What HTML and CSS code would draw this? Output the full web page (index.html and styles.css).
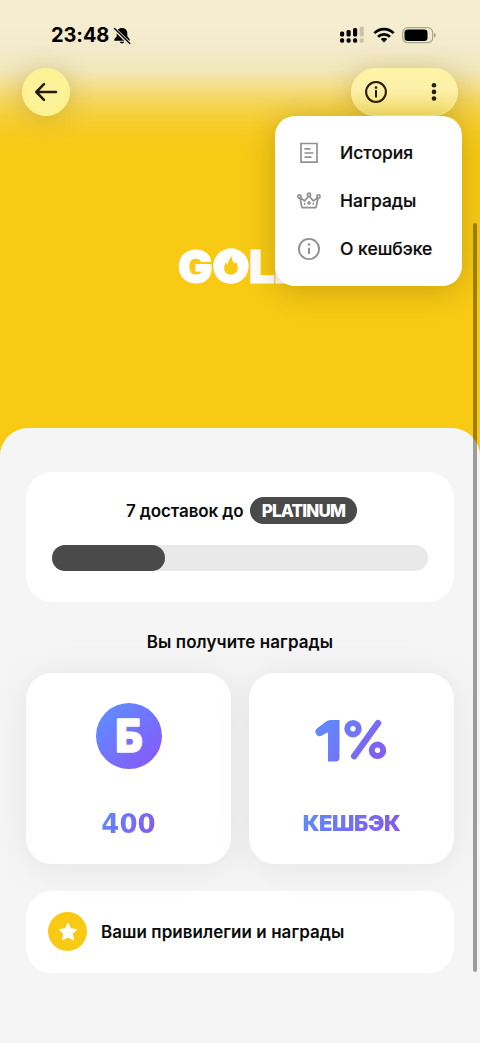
FILE: index.html
```html
<!DOCTYPE html>
<html lang="ru">
<head>
<meta charset="utf-8">
<meta name="viewport" content="width=device-width">
<title>Gold</title>
<link rel="stylesheet" href="styles.css">
</head>
<body>
<main class="screen">
  <header class="top">
    <div class="status">
      <div class="status-left">
        <span class="time">23:48</span>
        <svg class="bell" width="18" height="18" viewBox="0 0 18 18"><path d="M9 1C5.800 1 3.700 3.200 3.700 6v3.200L1.300 12.200v1.500h15.400v-1.500l-2.400-3V6C14.300 3.200 12.200 1 9 1ZM6.700 14.700a2.400 2.400 0 0 0 4.600 0Z"/><path d="M1.500 2 16.800 16.800" stroke="#f4ecce" stroke-width="3.400"/><path d="M1.500 1.500 16.800 16.400" stroke="#000" stroke-width="1.400" stroke-linecap="round"/></svg>
      </div>
      <div class="status-right">
        <svg width="25" height="18" viewBox="0 0 25 18"><rect x="0" y="5.500" width="4.200" height="5" rx="1.500"/><rect x="6.500" y="4" width="4.200" height="6.500" rx="1.500"/><rect x="13" y="2" width="4.200" height="8.500" rx="1.500"/><rect x="0" y="12.200" width="4.200" height="4.600" rx="1.700"/><rect x="6.500" y="12.200" width="4.200" height="4.600" rx="1.700"/><rect x="13" y="12.200" width="4.200" height="4.600" rx="1.700"/><g fill="#c8c2a8"><rect x="19.600" y=".5" width="4.200" height="10" rx="1.500"/><rect x="19.600" y="12.200" width="4.200" height="4.600" rx="1.700"/></g></svg>
        <svg class="wifi" width="22" height="16" viewBox="0 0 22 16"><g fill="none" stroke="#000" stroke-width="2.700"><path d="M1.400 6.100a13.800 13.800 0 0 1 19.200 0"/><path d="M5 9.800a8.600 8.600 0 0 1 12 0"/></g><path d="M7.800 12.100a4.600 4.600 0 0 1 6.400 0L11 15.400Z"/></svg>
        <svg class="battery" width="35" height="17" viewBox="0 0 35 17"><rect x=".7" y=".7" width="30" height="15" rx="5" fill="none" stroke="#aaa58e" stroke-width="1.200"/><rect x="2.500" y="2.500" width="23" height="11.500" rx="3.200"/><path d="M32 5.800c2.300.7 2.300 4.300 0 5Z" fill="#aaa58e"/></svg>
      </div>
    </div>
    <nav class="nav">
      <button class="glass back" aria-label="Назад"><svg width="24" height="20" viewBox="0 0 24 20"><path d="M22 10H2.500M10 2.200 2.300 10l7.700 7.800" fill="none" stroke="#261c00" stroke-width="2.500" stroke-linecap="round" stroke-linejoin="round"/></svg></button>
      <div class="glass actions">
        <svg width="24" height="24" viewBox="0 0 24 24"><circle cx="12" cy="12" r="9.900" fill="none" stroke="#261c00" stroke-width="2"/><circle cx="12" cy="7.600" r="1.300" fill="#261c00"/><path d="M12 10.800v6" stroke="#261c00" stroke-width="2" stroke-linecap="round"/></svg>
        <svg class="dots" width="6" height="20" viewBox="0 0 6 20" fill="#261c00"><circle cx="3" cy="3.300" r="2.300"/><circle cx="3" cy="9.900" r="2.300"/><circle cx="3" cy="16.500" r="2.300"/></svg>
        <div class="menu">
          <div class="menu-item"><svg width="24" height="24" viewBox="0 0 24 24"><path d="M4 2.500h16v18.700H4Z"/><path d="M7.500 7.800h6M7.500 12h9M7.500 16.200h7"/></svg><span>История</span></div>
          <div class="menu-item"><svg width="24" height="24" viewBox="0 0 24 24" stroke-linejoin="round"><g stroke-width="1.700"><path d="m2.900 8.500 2.100 10.200h14l2.100-10.200-4.700 3.400L12 7l-4.400 4.900Z"/><g fill="#fff"><circle cx="2.500" cy="7.500" r="1.600"/><circle cx="12" cy="5.700" r="1.600"/><circle cx="21.500" cy="7.500" r="1.600"/></g></g><path d="m12 12 1.800 2-1.800 2-1.800-2Z" fill="#919191" stroke-width=".5"/><path d="M7 14.700h1.500M15.500 14.700H17" stroke-width="1.900"/></svg><span>Награды</span></div>
          <div class="menu-item"><svg width="24" height="24" viewBox="0 0 24 24"><circle cx="12" cy="12" r="10.100" stroke-width="1.900"/><circle cx="12" cy="7.500" r="1.300" fill="#919191" stroke="none"/><path d="M12 10.700v6.200" stroke-width="2"/></svg><span>О кешбэке</span></div>
        </div>
      </div>
    </nav>
  </header>
  <section class="hero">
    <div class="brand"><span class="brand-g">G</span><span class="brand-o">O<svg class="flame" width="36" height="36" viewBox="0 0 36 36"><circle cx="18" cy="18" r="17.700" fill="#fff"/><path d="M18.500 8.200c.3 4 1.700 5.300 3.200 7.600l1.200-2c2 3.700 2.600 6.700 1.200 9.300-2.800 5-9.800 4.800-12.300.1-1.500-3.400-.3-6.500 1.200-8.900l1.500 2.700c.7-4.200 1.900-6.300 4-8.800Z" fill="#f7c916"/></svg></span><span class="brand-l">L</span><span class="brand-d">D</span></div>
  </section>
  <section class="sheet">
    <div class="card progress-card">
      <div class="progress-title"><span class="deliveries">7 доставок до</span><span class="tier"><span>PLATINUM</span></span></div>
      <div class="track"><div class="fill" style="width:30.1%"></div></div>
    </div>
    <h2 class="heading"><span>Вы получите награды</span></h2>
    <div class="rewards">
      <article class="card reward">
        <div class="coin"><svg width="66" height="66" viewBox="0 0 66 66"><text x="19.500" y="48.700" class="coin-letter" textLength="27" lengthAdjust="spacingAndGlyphs">Б</text></svg></div>
        <div class="amount"><span>400</span></div>
      </article>
      <article class="card reward">
        <svg class="percent" width="72" height="44" viewBox="0 0 72 44" role="img" aria-label="1%"><defs><linearGradient id="pg" x1="0" y1="0" x2="72" y2="44" gradientUnits="userSpaceOnUse"><stop stop-color="#5e8fff"/><stop offset="1" stop-color="#8758f0"/></linearGradient></defs><path d="M16 1h8.500v37.500a4 4 0 0 1-4 4H13V13.200l-6.200 3.300a4.300 4.300 0 0 1-4.900-7l8.200-6.200Q13 1 16 1Z" fill="url(#pg)"/><g fill="none" stroke="url(#pg)"><circle cx="38" cy="9.700" r="5.700" stroke-width="6"/><circle cx="62.500" cy="31.300" r="5.700" stroke-width="6"/><path d="m63 4.200-23.800 33" stroke-width="6.400" stroke-linecap="round"/></g></svg>
        <div class="amount cashback"><span>КЕШБЭК</span></div>
      </article>
    </div>
    <div class="card privileges">
      <div class="star"><svg width="22" height="22" viewBox="0 0 22 22"><path d="m11 2 2.700 5.800 6.200.7-4.600 4.300 1.300 6.200L11 16l-5.600 3 1.300-6.200-4.600-4.300 6.200-.7Z" fill="#fff" stroke="#fff" stroke-linejoin="round"/></svg></div>
      <span>Ваши привилегии и награды</span>
    </div>
  </section>
  <div class="scrollbar"></div>
</main>
</body>
</html>
```
FILE: styles.css
```css
* { box-sizing: border-box; }
body { margin: 0; font-family: Inter, "Noto Sans", sans-serif; color: #0b0b0b; }
svg { display: block; flex: none; }
.screen { position: relative; width: 480px; height: 1043px; overflow: hidden; background: #f5f5f5; display: flex; flex-direction: column; }
.top { height: 160px; flex: none; background: linear-gradient(#f6edcf 0, #f5edcf 25px, #f3eacb 50px, #f2e7b9 70px, #f4df8e 85px, #f5d65e 100px, #f6d03a 115px, #f7cb20 132px, #f8ca14 155px); }
.status { display: flex; justify-content: space-between; align-items: center; height: 68px; padding: 2px 43px 0 51px; }
.status-left, .status-right { display: flex; align-items: center; }
.time { font-size: 20px; font-weight: 700; line-height: 24px; width: 62px; letter-spacing: -.1px; color: #000; white-space: nowrap; }
.bell { margin-top: 2px; }
.wifi { margin-left: 8px; }
.battery { margin-left: 7px; }
.nav { display: flex; justify-content: space-between; padding: 0 22px; }
.glass { border: 1px solid #faf3a1; background: radial-gradient(circle, #fdf0a2, #fcf38a); box-shadow: 0 2px 26px rgba(110, 85, 0, .25); height: 48px; }
.back { width: 48px; border-radius: 50%; padding: 0; display: flex; align-items: center; justify-content: center; }
.actions { position: relative; width: 107px; border-radius: 24px; background: linear-gradient(#fff3a5, #fdf0aa 45%, #fae36c); display: flex; align-items: center; justify-content: space-between; padding: 0 20px 0 12px; }
.menu { position: absolute; z-index: 3; top: 46.500px; right: -5px; width: 187px; height: 170px; border-radius: 20px; background: #fff; box-shadow: 0 4px 30px rgba(110, 80, 0, .32); padding: 13px 0 0 22px; }
.menu-item { height: 48px; display: flex; align-items: center; gap: 19px; font-size: 17.500px; font-weight: 500; white-space: nowrap; -webkit-text-stroke: .2px #0b0b0b; }
.menu-item svg { fill: none; stroke: #919191; stroke-width: 1.7; }
.hero { height: 268px; flex: none; background: #f8ca14; padding: 82px 0 0 178px; }
.brand { display: flex; width: 144px; height: 48px; font-size: 46px; font-weight: 900; line-height: 48px; color: #fff; -webkit-text-stroke: 1px #fff; }
.brand span { flex: none; }
.brand-g { width: 35px; letter-spacing: -2px; }
.brand-o { position: relative; width: 36px; letter-spacing: -2px; }
.flame { position: absolute; left: 0; top: 6px; }
.brand-l { width: 25px; letter-spacing: -3px; }
.sheet { position: relative; isolation: isolate; height: 615px; flex: none; padding: 43.500px 26px 0; }
.sheet::before { content: ""; position: absolute; z-index: -2; inset: 0 0 auto; height: 34px; background: #f8ca14; }
.sheet::after { content: ""; position: absolute; z-index: -1; inset: 0; background: #f5f5f5; border-radius: 28px 28px 0 0; }
.card { background: #fff; border-radius: 26px; }
.progress-card { height: 130px; padding: 26px; }
.progress-title { height: 26px; display: flex; align-items: center; padding-left: 74px; font-weight: 600; font-size: 17px; white-space: nowrap; }
.deliveries { width: 124px; flex: none; letter-spacing: -.12px; }
.tier { width: 107px; height: 27px; border-radius: 14px; background: #4a4a4a; color: #fff; font-size: 17px; font-weight: 800; display: flex; align-items: center; justify-content: center; letter-spacing: -.8px; }
.track { height: 26px; margin-top: 21px; border-radius: 13px; background: #e9e9e9; }
.fill { height: 26px; border-radius: 13px; background: #4a4a4a; }
.heading { margin: 29px 0 20px; height: 22px; line-height: 22px; font-size: 17px; font-weight: 600; letter-spacing: .08px; text-align: center; }
.rewards { display: grid; grid-template-columns: 205px 205px; gap: 18px; }
.reward { height: 191px; display: flex; flex-direction: column; align-items: center; padding-top: 30px; box-shadow: 0 3px 38px rgba(0, 0, 0, .07); }
.coin { width: 66px; height: 66px; border-radius: 50%; background: linear-gradient(135deg, #5f8cff 10%, #865afa 90%); }
.coin-letter { font: 900 45px Inter, sans-serif; fill: #fff; stroke: #fff; stroke-width: 1.3; stroke-linejoin: round; }
.amount { margin-top: 40px; height: 30px; font: bold 26px/30px "DejaVu Sans", sans-serif; }
.amount span { background: linear-gradient(120deg, #5d8dfc, #8755ec); -webkit-background-clip: text; background-clip: text; color: transparent; display: block; }
.percent { margin: 16px 1px 0 0; }
.cashback { margin-top: 45px; font: 900 22px/30px Inter, sans-serif; letter-spacing: -.4px; }
.privileges { margin-top: 27px; height: 82px; display: flex; align-items: center; padding-left: 22px; gap: 14px; font-size: 17px; font-weight: 600; letter-spacing: .05px; white-space: nowrap; }
.star { width: 39px; height: 39px; border-radius: 50%; background: #f8ca14; display: flex; align-items: center; justify-content: center; }
.scrollbar { position: absolute; z-index: 2; left: 473px; top: 223px; width: 4px; height: 749px; border-radius: 2px; background: rgba(0, 0, 0, .36); }
```
